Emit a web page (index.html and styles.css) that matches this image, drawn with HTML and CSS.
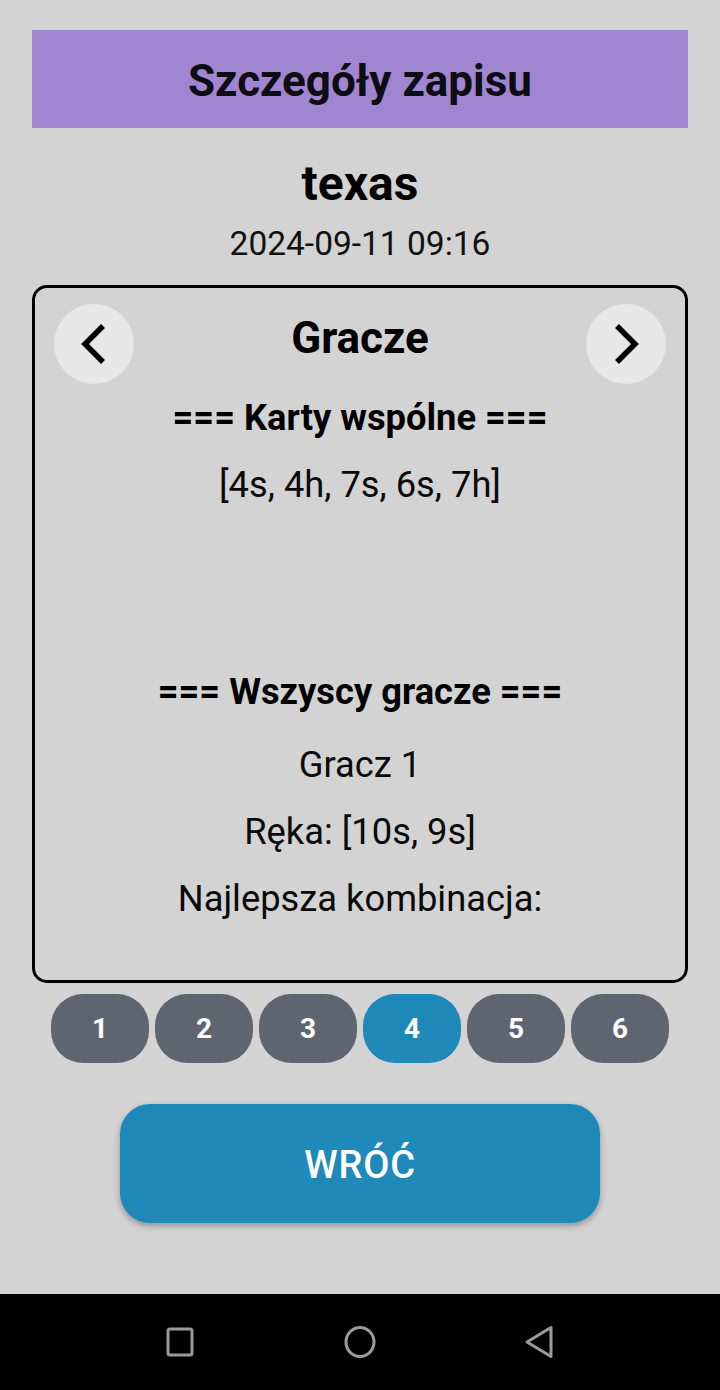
FILE: index.html
```html
<!DOCTYPE html>
<html lang="pl">
<head>
<meta charset="utf-8">
<title>Szczegóły zapisu</title>
<link rel="stylesheet" href="styles.css">
</head>
<body>
<div class="screen">
  <main class="content">
    <header class="topbar"><h1 class="topbar-title">Szczegóły zapisu</h1></header>
    <h2 class="game">texas</h2>
    <p class="date">2024-09-11 09:16</p>
    <section class="card">
      <div class="card-head">
        <button class="nav-btn" aria-label="Poprzednia">
          <svg width="80" height="80" viewBox="0 0 80 80"><polyline points="49,22 31,40 49,58" fill="none" stroke="#000" stroke-width="5.5"/></svg>
        </button>
        <h3 class="card-title">Gracze</h3>
        <button class="nav-btn" aria-label="Następna">
          <svg width="80" height="80" viewBox="0 0 80 80"><polyline points="31,22 49,40 31,58" fill="none" stroke="#000" stroke-width="5.5"/></svg>
        </button>
      </div>
      <div class="card-body">
        <p class="line head">=== Karty wspólne ===</p>
        <p class="line">[4s, 4h, 7s, 6s, 7h]</p>
        <p class="line head section-gap">=== Wszyscy gracze ===</p>
        <p class="line first-player">Gracz 1</p>
        <p class="line">Ręka: [10s, 9s]</p>
        <p class="line">Najlepsza kombinacja:</p>
      </div>
    </section>
    <div class="pager">
      <button class="page">1</button>
      <button class="page">2</button>
      <button class="page">3</button>
      <button class="page active">4</button>
      <button class="page">5</button>
      <button class="page">6</button>
    </div>
    <button class="back">WRÓĆ</button>
  </main>
  <nav class="sysbar">
    <span class="sys-slot">
      <svg width="30" height="32" viewBox="0 0 30 32"><rect x="3" y="3" width="24" height="26" rx="2" fill="none" stroke="#9b9b9b" stroke-width="3"/></svg>
    </span>
    <span class="sys-slot">
      <svg width="34" height="34" viewBox="0 0 34 34"><ellipse cx="17" cy="17" rx="14" ry="14.5" fill="none" stroke="#9b9b9b" stroke-width="3"/></svg>
    </span>
    <span class="sys-slot">
      <svg width="32" height="34" viewBox="0 0 32 34"><path d="M27 2.5 L27 31.5 L3 17 Z" fill="none" stroke="#9b9b9b" stroke-width="3" stroke-linejoin="round"/></svg>
    </span>
  </nav>
</div>
</body>
</html>
```
FILE: styles.css
```css
* { box-sizing: border-box; }
html, body { margin: 0; padding: 0; }
body {
  background: #d3d3d3;
  font-family: Roboto, "Noto Sans", "Liberation Sans", sans-serif;
  color: #000;
}
.screen {
  width: 720px;
  height: 1390px;
  display: flex;
  flex-direction: column;
  overflow: hidden;
}
.content {
  flex: 1;
  display: flex;
  flex-direction: column;
  padding: 30px 32px 0;
}
.topbar {
  height: 98px;
  padding-top: 4px;
  background: #a085d0;
  display: flex;
  align-items: center;
  justify-content: center;
}
.topbar-title {
  margin: 0;
  font-size: 44px;
  font-weight: 700;
  color: #0d0d14;
  line-height: 1;
}
.game {
  margin: 28px 0 0;
  font-size: 48px;
  font-weight: 700;
  line-height: 56px;
  text-align: center;
}
.date {
  margin: 12px 0 0;
  font-size: 33.5px;
  font-weight: 400;
  line-height: 40px;
  text-align: center;
  color: #111;
}
.card {
  margin-top: 21px;
  border: 3px solid #000;
  border-radius: 15px;
  padding: 16px 19px 48px;
}
.card-head {
  display: flex;
  justify-content: space-between;
  align-items: flex-start;
  height: 80px;
}
.nav-btn {
  width: 80px;
  height: 80px;
  border: 0;
  padding: 0;
  border-radius: 50%;
  background: #e7e7e7;
  display: flex;
  align-items: center;
  justify-content: center;
}
.nav-btn svg { display: block; }
.card-title {
  margin: 0;
  font-size: 44px;
  font-weight: 700;
  line-height: 68px;
}
.card-body {
  display: flex;
  flex-direction: column;
  align-items: center;
}
.line {
  margin: 0;
  font-size: 36.3px;
  line-height: 67px;
  font-weight: 400;
  text-align: center;
  color: #0a0a0a;
}
.line.head { font-weight: 700; color: #000; }
.section-gap { margin-top: 140px; }
.first-player { margin-top: 6px; }
.pager {
  margin-top: 11px;
  display: flex;
  justify-content: center;
  gap: 6px;
}
.page {
  width: 98px;
  height: 69px;
  border: 0;
  border-radius: 32px;
  background: #5f6471;
  color: #fff;
  font-family: Roboto, "Noto Sans", sans-serif;
  font-size: 28px;
  font-weight: 700;
  padding: 0;
}
.page.active { background: #1e88b9; }
.back {
  margin: 41px auto 0;
  width: 480px;
  height: 119px;
  border: 0;
  border-radius: 30px;
  padding-top: 4px;
  background: #1f89b9;
  color: #fff;
  font-family: Roboto, "Noto Sans", sans-serif;
  font-size: 38px;
  font-weight: 500;
  letter-spacing: 0.02em;
  box-shadow: 0 3px 6px rgba(0, 0, 0, 0.3);
}
.sysbar {
  height: 96px;
  background: #000;
  display: flex;
  justify-content: center;
  align-items: center;
}
.sys-slot {
  width: 180px;
  display: flex;
  justify-content: center;
  align-items: center;
}
.sys-slot svg { display: block; }
```
